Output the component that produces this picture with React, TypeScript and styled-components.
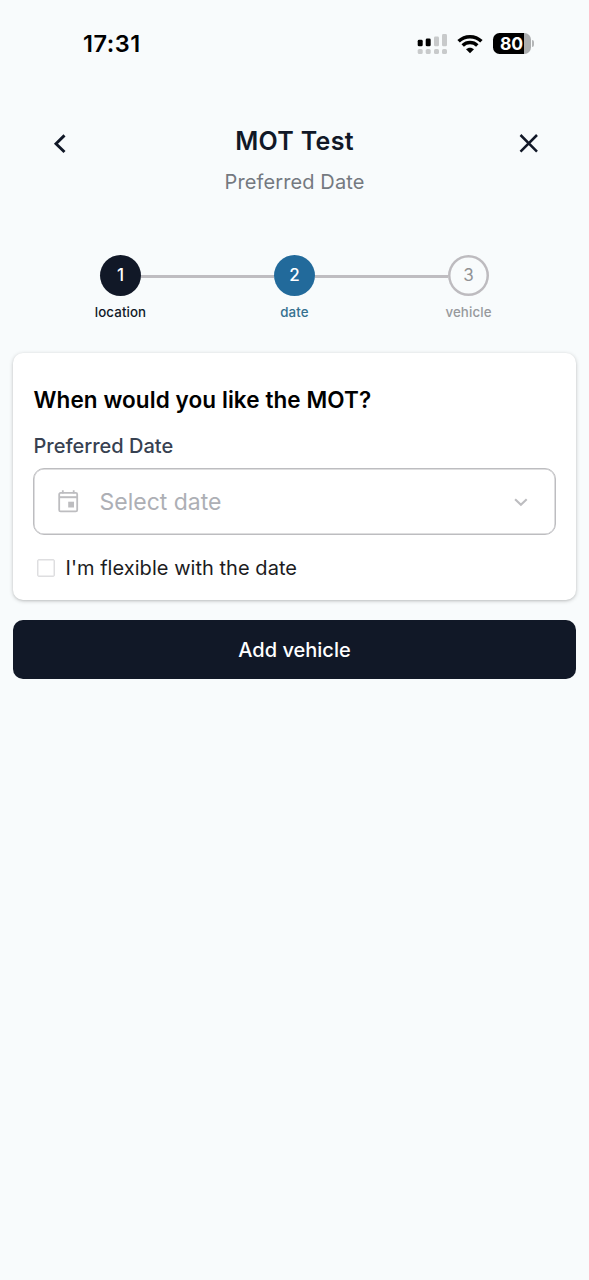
import React from "react";
import styled, { createGlobalStyle } from "styled-components";

const GlobalStyle = createGlobalStyle`
  *, *::before, *::after { box-sizing: border-box; }
  body { margin: 0; background: #f8fbfc; }
  button { font: inherit; cursor: pointer; }
`;

const Screen = styled.main`
  width: 589px;
  min-height: 1280px;
  background: #f8fbfc;
  color: #111827;
  font-family: Inter, "Liberation Sans", sans-serif;
  -webkit-font-smoothing: antialiased;
`;

const StatusBar = styled.div`
  display: flex;
  align-items: center;
  justify-content: space-between;
  height: 88px;
  padding: 0 55px 0 83px;
`;

const Clock = styled.time`
  color: #000;
  font-size: 23.5px;
  font-weight: 600;
  line-height: 28px;
  letter-spacing: 0.5px;
`;

const Indicators = styled.div`
  display: flex;
  align-items: center;
  gap: 10px;
  margin-top: -1px;
`;

const Battery = styled.div`
  display: flex;
  align-items: center;
  gap: 1px;
`;

const BatteryBody = styled.div`
  display: flex;
  align-items: center;
  justify-content: center;
  width: 38px;
  height: 21px;
  border-radius: 6.5px;
  background: linear-gradient(to right, #000 31px, #acaeaf 31px);
  color: #fff;
  font-size: 17.5px;
  font-weight: 700;
  line-height: 21px;
`;

const BatteryTip = styled.div`
  width: 2.5px;
  height: 7px;
  border-radius: 0 3px 3px 0;
  background: #b4b6b7;
`;

const Header = styled.header`
  display: flex;
  justify-content: space-between;
  height: 152px;
  padding: 37px 44px 0 44px;
`;

const IconButton = styled.button`
  display: flex;
  align-items: center;
  justify-content: center;
  width: 32px;
  height: 32px;
  margin-top: 2px;
  padding: 0;
  border: 0;
  background: none;
  color: #111827;
`;

const Titles = styled.div`
  display: flex;
  flex-direction: column;
  align-items: center;
  gap: 12px;
`;

const Title = styled.h1`
  margin: 0;
  font-size: 25px;
  font-weight: 600;
  line-height: 32px;
  letter-spacing: 0.3px;
`;

const Subtitle = styled.p`
  margin: 0;
  color: #747980;
  font-size: 20px;
  line-height: 26px;
  letter-spacing: 0.12px;
`;

const Stepper = styled.div`
  display: flex;
  height: 98px;
  padding: 14.5px 100px 0;
`;

const Step = styled.div<{ $color: string }>`
  display: flex;
  flex: none;
  flex-direction: column;
  align-items: center;
  gap: 8px;
  width: 41px;
  color: ${(p) => p.$color};
`;

const StepCircle = styled.div<{ $fill?: string }>`
  display: flex;
  flex: none;
  align-items: center;
  justify-content: center;
  width: 41px;
  height: 41px;
  background: ${(p) => p.$fill ?? "transparent"};
  box-shadow: ${(p) => (p.$fill ? "none" : "inset 0 0 0 2.5px #bdbbbf")};
  border-radius: 50%;
  color: ${(p) => (p.$fill ? "#fff" : "#919294")};
  font-size: 17px;
  font-weight: ${(p) => (p.$fill ? 500 : 400)};
`;

const StepLabel = styled.span`
  font-size: 13.3px;
  font-weight: 450;
  line-height: 17px;
  letter-spacing: 0.1px;
  white-space: nowrap;
`;

const Connector = styled.div`
  flex: 1;
  height: 3px;
  margin-top: 20px;
  background: #bfbdc1;
`;

const Content = styled.div`
  display: flex;
  flex-direction: column;
  gap: 20px;
  padding: 14.5px 13px 0;
`;

const Card = styled.section`
  height: 247px;
  padding: 32px 20.5px 0;
  border-radius: 10px;
  background: #fff;
  box-shadow: 0 1px 4px rgba(0, 0, 0, 0.2), 0 1px 2px rgba(0, 0, 0, 0.08);
`;

const Question = styled.h2`
  margin: 0;
  color: #000;
  font-size: 22.5px;
  font-weight: 600;
  line-height: 30px;
  letter-spacing: 0.09px;
`;

const FieldLabel = styled.label`
  display: block;
  margin-top: 18px;
  color: #374151;
  font-size: 20px;
  font-weight: 500;
  line-height: 26px;
`;

const DateField = styled.div`
  display: flex;
  align-items: center;
  height: 67px;
  margin: 9.5px 0 0 -0.5px;
  padding: 0 23.5px 0 22px;
  border: 1px solid #bdbdc0;
  box-shadow: inset 0 0 0 0.5px #bdbdc0;
  border-radius: 11px;
`;

const Placeholder = styled.span`
  flex: 1;
  margin-left: 17.5px;
  color: #adafb5;
  font-size: 23px;
  line-height: 30px;
`;

const FlexibleRow = styled.label`
  display: flex;
  align-items: center;
  gap: 11px;
  margin-top: 18.5px;
  padding-left: 3px;
  color: #1c1c1e;
  font-size: 20px;
  line-height: 28px;
  letter-spacing: 0.04px;
`;

const CheckBox = styled.span`
  width: 18px;
  height: 18px;
  border: 1px solid #dedee0;
  box-shadow: inset 0 0 0 0.5px #dedee0;
  border-radius: 2px;
`;

const PrimaryButton = styled.button`
  height: 59px;
  padding: 1px 0 0;
  border: 0;
  border-radius: 10px;
  background: #111827;
  color: #fff;
  font-size: 20px;
  font-weight: 500;
`;

const SignalIcon = () => (
  <svg width="30" height="22" viewBox="0 0 30 22" aria-hidden="true">
    <rect x="0.7" y="6.8" width="5" height="6.5" rx="1.4" fill="#000" />
    <rect x="8.7" y="5.5" width="5" height="7.8" rx="1.4" fill="#000" />
    <rect x="17" y="3.5" width="5" height="9.8" rx="1.4" fill="#c8cacb" />
    <rect x="25" y="1" width="5" height="12.3" rx="1.4" fill="#c8cacb" />
    {[0.7, 8.7, 17, 25].map((x) => (
      <rect key={x} x={x} y="16" width="5" height="5" rx="1.6" fill="#c8cacb" />
    ))}
  </svg>
);

const WifiIcon = () => (
  <svg width="26" height="20" viewBox="0 0 26 20" fill="none" stroke="#000" aria-hidden="true">
    <path d="M1.6 7.3C8 1.1 18 1.1 24.4 7.3" strokeWidth="3.5" />
    <path d="M5.7 11.5C9.8 7.6 16.2 7.6 20.3 11.5" strokeWidth="3.5" />
    <path d="M9 15.2C11.2 13.1 14.8 13.1 17 15.2L13 19.2Z" fill="#000" stroke="none" />
  </svg>
);

const BackIcon = () => (
  <svg width="32" height="32" viewBox="0 0 32 32" fill="none" aria-hidden="true">
    <path d="M20.5 8.4L12 16.7L20.5 25" stroke="currentColor" strokeWidth="2.9" />
  </svg>
);

const CloseIcon = () => (
  <svg width="32" height="32" viewBox="0 0 32 32" fill="none" aria-hidden="true">
    <path d="M7.5 8L24 24.7M24 8L7.5 24.7" stroke="currentColor" strokeWidth="2.5" />
  </svg>
);

const CalendarIcon = () => (
  <svg width="26" height="26" viewBox="0 0 26 26" fill="none" stroke="#bdbdc0" aria-hidden="true">
    <rect x="3.2" y="3.9" width="18" height="18.4" rx="1.4" strokeWidth="1.8" />
    <path d="M3.2 8.2H21.2" strokeWidth="2" />
    <path d="M6.8 1.3V4.5M17.7 1.3V4.5" strokeWidth="1.8" />
    <rect x="12.2" y="12.7" width="5.8" height="5.8" fill="#bdbdc0" stroke="none" />
  </svg>
);

const ChevronIcon = () => (
  <svg width="20" height="20" viewBox="0 0 20 20" fill="none" aria-hidden="true">
    <path d="M4.1 7.2L9.9 12.8L15.7 7.2" stroke="#bdbdc0" strokeWidth="2.1" />
  </svg>
);

export default function App() {
  return (
    <Screen>
      <GlobalStyle />
      <StatusBar>
        <Clock>17:31</Clock>
        <Indicators>
          <SignalIcon />
          <WifiIcon />
          <Battery>
            <BatteryBody>80</BatteryBody>
            <BatteryTip />
          </Battery>
        </Indicators>
      </StatusBar>

      <Header>
        <IconButton aria-label="Back">
          <BackIcon />
        </IconButton>
        <Titles>
          <Title>MOT Test</Title>
          <Subtitle>Preferred Date</Subtitle>
        </Titles>
        <IconButton aria-label="Close">
          <CloseIcon />
        </IconButton>
      </Header>

      <Stepper>
        <Step $color="#111827">
          <StepCircle $fill="#111827">1</StepCircle>
          <StepLabel>location</StepLabel>
        </Step>
        <Connector />
        <Step $color="#35708f">
          <StepCircle $fill="#226a9b">2</StepCircle>
          <StepLabel>date</StepLabel>
        </Step>
        <Connector />
        <Step $color="#97999c">
          <StepCircle>3</StepCircle>
          <StepLabel>vehicle</StepLabel>
        </Step>
      </Stepper>

      <Content>
        <Card>
          <Question>When would you like the MOT?</Question>
          <FieldLabel>Preferred Date</FieldLabel>
          <DateField>
            <CalendarIcon />
            <Placeholder>Select date</Placeholder>
            <ChevronIcon />
          </DateField>
          <FlexibleRow>
            <CheckBox />
            I'm flexible with the date
          </FlexibleRow>
        </Card>
        <PrimaryButton>Add vehicle</PrimaryButton>
      </Content>
    </Screen>
  );
}
